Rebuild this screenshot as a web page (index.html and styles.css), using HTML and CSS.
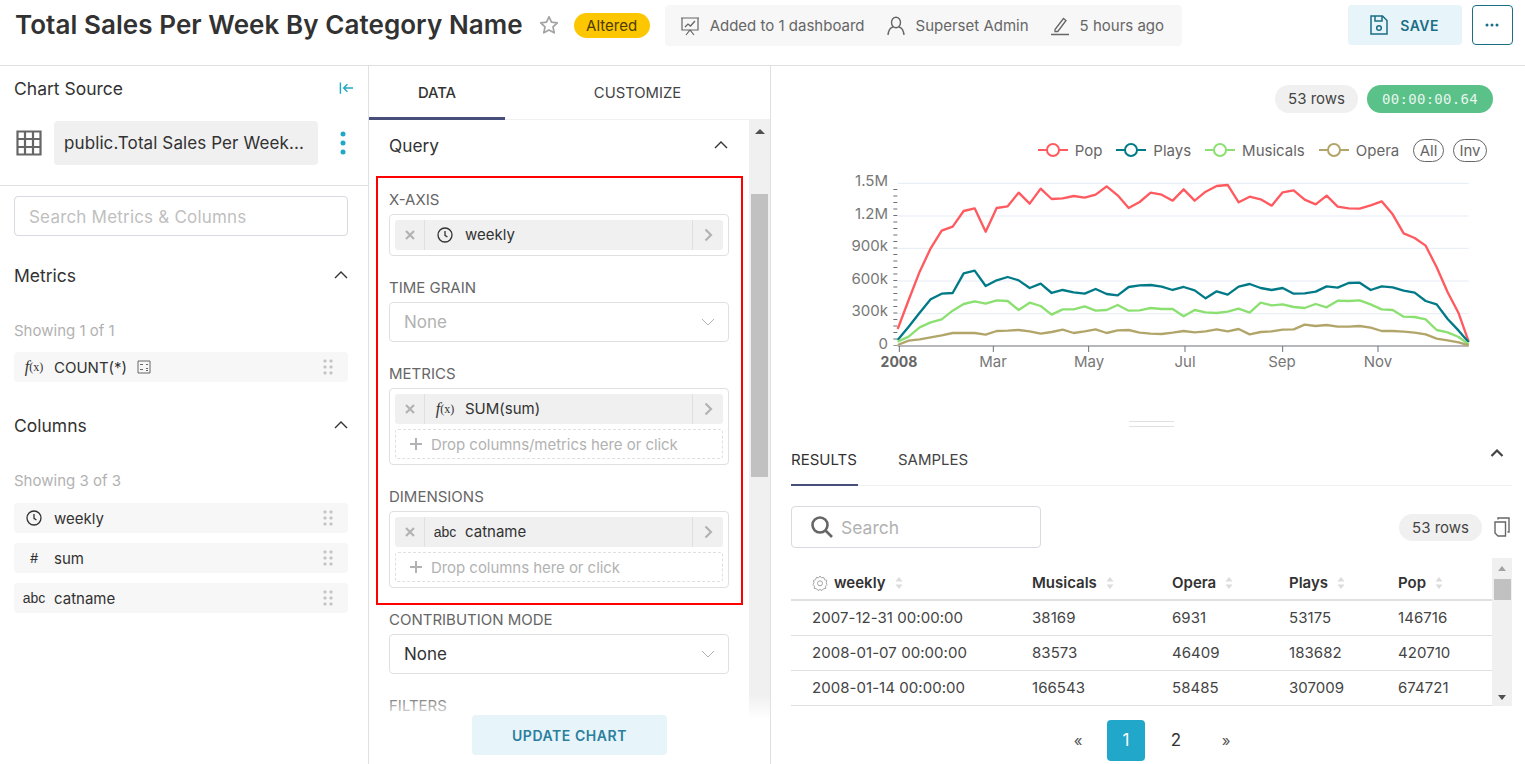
FILE: index.html
```html
<!DOCTYPE html>
<html lang="en">
<head>
<meta charset="utf-8">
<title>Total Sales Per Week By Category Name</title>
<link rel="stylesheet" href="styles.css">
</head>
<body>
<svg class="sprite" xmlns="http://www.w3.org/2000/svg">
  <symbol id="clock" viewBox="0 0 16 16"><circle cx="8" cy="8" r="7" fill="none" stroke="currentColor" stroke-width="1.3"/><path d="M8 4v4.4l2.4 1.6" fill="none" stroke="currentColor" stroke-width="1.3"/></symbol>
  <symbol id="drag" viewBox="0 0 10 16"><g fill="#c4c4c4"><rect x="0.5" y="0.5" width="3" height="3" rx="1"/><rect x="6.5" y="0.5" width="3" height="3" rx="1"/><rect x="0.5" y="6.5" width="3" height="3" rx="1"/><rect x="6.5" y="6.5" width="3" height="3" rx="1"/><rect x="0.5" y="12.5" width="3" height="3" rx="1"/><rect x="6.5" y="12.5" width="3" height="3" rx="1"/></g></symbol>
  <symbol id="up" viewBox="0 0 14 8"><path d="M1 7l6-6 6 6" fill="none" stroke="currentColor" stroke-width="1.4"/></symbol>
  <symbol id="up-bold" viewBox="0 0 14 8"><path d="M1.500 7l5.500-5.500L12.500 7" fill="none" stroke="currentColor" stroke-width="2.200"/></symbol>
  <symbol id="down" viewBox="0 0 14 8"><path d="M1 1l6 6 6-6" fill="none" stroke="currentColor" stroke-width="1"/></symbol>
  <symbol id="x" viewBox="0 0 10 10"><path d="M1 1l8 8M9 1l-8 8" fill="none" stroke="currentColor" stroke-width="2.2"/></symbol>
  <symbol id="next" viewBox="0 0 9 14"><path d="M1.5 1.5L7 7l-5.5 5.5" fill="none" stroke="currentColor" stroke-width="2.2"/></symbol>
  <symbol id="plus" viewBox="0 0 12 12"><path d="M6 0v12M0 6h12" fill="none" stroke="currentColor" stroke-width="2"/></symbol>
  <symbol id="sort" viewBox="0 0 8 12"><path d="M4 0l3.5 4.5h-7zM4 12L.5 7.5h7z" fill="#dcdcdc"/></symbol>
  <symbol id="legend" viewBox="0 0 30 16"><path d="M0 8h9M21 8h9" stroke="currentColor" stroke-width="2"/><circle cx="15" cy="8" r="6" fill="#fff" stroke="currentColor" stroke-width="2"/></symbol>
</svg>

<div class="app">
  <header class="topbar">
    <h1 class="title">Total Sales Per Week By Category Name</h1>
    <svg class="star" viewBox="0 0 20 20"><path d="M10 1.8l2.5 5.4 5.8.7-4.3 4 1.2 5.9L10 14.9 4.800 17.800 6 11.900l-4.300-4 5.800-.7z" fill="none" stroke="#a3a3a3" stroke-width="1.7" stroke-linejoin="round"/></svg>
    <span class="altered">Altered</span>
    <div class="meta">
      <svg class="meta-icon" viewBox="0 0 20 20" fill="none" stroke="#666" stroke-width="1.2"><path d="M1 2h18M2 2v12h16V2M6 19l4-5 4 5"/><path d="M5 11l3-3 2.500 2L15 5" stroke-width="1.300"/></svg>
      <span class="meta-text">Added to 1 dashboard</span>
      <svg class="meta-icon meta-gap" viewBox="0 0 20 20" fill="none" stroke="#666" stroke-width="1.400"><ellipse cx="10" cy="6.500" rx="4.500" ry="5.300"/><path d="M2 19c.5-5 3-7.500 5-8M18 19c-.5-5-3-7.500-5-8"/></svg>
      <span class="meta-text">Superset Admin</span>
      <svg class="meta-icon meta-gap" viewBox="0 0 20 20" fill="none" stroke="#666" stroke-width="1.300"><path d="M5 13.500L13.500 2.500l2.500 2L7.800 15.500H5zM1 18.500h18"/></svg>
      <span class="meta-text">5 hours ago</span>
    </div>
    <button class="save" type="button">
      <svg class="save-icon" viewBox="0 0 18 20" fill="none" stroke="currentColor" stroke-width="1.500"><path d="M1 1h11.500L17 5.500V19H1z"/><path d="M5 1v5h7V1"/><circle cx="9" cy="13" r="2.300"/></svg>
      SAVE
    </button>
    <button class="more" type="button" aria-label="More"><svg class="more-icon" viewBox="0 0 14 4"><circle cx="2" cy="2" r="1.500"/><circle cx="7" cy="2" r="1.500"/><circle cx="12" cy="2" r="1.500"/></svg></button>
  </header>

  <main class="workspace">
    <aside class="source">
      <div class="source-head">
        <span>Chart Source</span>
        <svg class="collapse" viewBox="0 0 16 14" fill="none" stroke="#20a7c9" stroke-width="1.500"><path d="M1.500 1v12M15 7H5M9 3L5 7l4 4"/></svg>
      </div>
      <div class="dataset">
        <svg class="grid-icon" viewBox="0 0 26 26"><path d="M1.500 1.500h23v23h-23zM1.500 9h23M1.500 17h23M9 1.500v23M17 1.500v23" fill="none" stroke="#666" stroke-width="2.200"/></svg>
        <div class="dataset-name">public.Total Sales Per Week...</div>
        <svg class="kebab" viewBox="0 0 6 24"><circle cx="3" cy="3" r="2.500" fill="#20a7c9"/><circle cx="3" cy="12" r="2.500" fill="#20a7c9"/><circle cx="3" cy="21" r="2.500" fill="#20a7c9"/></svg>
      </div>
      <div class="search-wrap"><div class="source-search">Search Metrics &amp; Columns</div></div>
      <div class="section-head metrics-head"><span>Metrics</span><svg class="chev"><use href="#up"/></svg></div>
      <div class="showing">Showing 1 of 1</div>
      <div class="item-list">
        <div class="item"><span class="type fx">f<small>(x)</small></span><span>COUNT(*)</span><svg class="calc" viewBox="0 0 14 14" fill="none" stroke="#666"><path d="M1 1h12v12H1zM3 4.500h3M9 4.500h2M3 9.500h3M9 8.500h2M9 10.500h2"/></svg><svg class="drag"><use href="#drag"/></svg></div>
      </div>
      <div class="section-head columns-head"><span>Columns</span><svg class="chev"><use href="#up"/></svg></div>
      <div class="showing">Showing 3 of 3</div>
      <div class="item-list columns-list">
        <div class="item"><span class="type"><svg class="clock"><use href="#clock"/></svg></span><span>weekly</span><svg class="drag"><use href="#drag"/></svg></div>
        <div class="item"><span class="type hash">#</span><span>sum</span><svg class="drag"><use href="#drag"/></svg></div>
        <div class="item"><span class="type abc">abc</span><span>catname</span><svg class="drag"><use href="#drag"/></svg></div>
      </div>
    </aside>

    <section class="controls">
      <nav class="tabs">
        <div class="tab tab-data">DATA</div>
        <div class="tab tab-custom">CUSTOMIZE</div>
      </nav>
      <div class="control-body">
        <div class="control-scroll">
          <div class="query-head"><span>Query</span><svg class="chev"><use href="#up"/></svg></div>
          <div class="highlight">
            <label class="field-label">X-AXIS</label>
            <div class="dnd">
              <div class="pill"><span class="pill-x"><svg class="x-icon"><use href="#x"/></svg></span><span class="pill-body"><span class="pill-type"><svg class="clock"><use href="#clock"/></svg></span>weekly</span><span class="pill-next"><svg class="next-icon"><use href="#next"/></svg></span></div>
            </div>
            <label class="field-label field-gap">TIME GRAIN</label>
            <div class="select muted"><span>None</span><svg class="select-chev"><use href="#down"/></svg></div>
            <label class="field-label field-gap">METRICS</label>
            <div class="dnd">
              <div class="pill"><span class="pill-x"><svg class="x-icon"><use href="#x"/></svg></span><span class="pill-body"><span class="pill-type fx">f<small>(x)</small></span>SUM(sum)</span><span class="pill-next"><svg class="next-icon"><use href="#next"/></svg></span></div>
              <div class="drop"><svg class="plus"><use href="#plus"/></svg>Drop columns/metrics here or click</div>
            </div>
            <label class="field-label field-gap">DIMENSIONS</label>
            <div class="dnd">
              <div class="pill"><span class="pill-x"><svg class="x-icon"><use href="#x"/></svg></span><span class="pill-body"><span class="pill-type abc">abc</span>catname</span><span class="pill-next"><svg class="next-icon"><use href="#next"/></svg></span></div>
              <div class="drop"><svg class="plus"><use href="#plus"/></svg>Drop columns here or click</div>
            </div>
          </div>
          <div class="below">
            <label class="field-label">CONTRIBUTION MODE</label>
            <div class="select"><span>None</span><svg class="select-chev"><use href="#down"/></svg></div>
            <label class="field-label field-gap">FILTERS</label>
            <div class="select"></div>
          </div>
        </div>
        <div class="scrollbar">
          <span class="arrow-up"></span>
          <div class="thumb"></div>
        </div>
      </div>
      <div class="update-bar"><button class="update" type="button">UPDATE CHART</button></div>
    </section>

    <section class="output">
      <div class="chart-pane">
        <div class="chips">
          <span class="chip">53 rows</span>
          <span class="timer">00:00:00.64</span>
        </div>
        <div class="legend">
          <span class="legend-item"><svg class="legend-icon pop"><use href="#legend"/></svg>Pop</span>
          <span class="legend-item"><svg class="legend-icon plays"><use href="#legend"/></svg>Plays</span>
          <span class="legend-item"><svg class="legend-icon musicals"><use href="#legend"/></svg>Musicals</span>
          <span class="legend-item"><svg class="legend-icon opera"><use href="#legend"/></svg>Opera</span>
          <span class="legend-btn legend-all">All</span>
          <span class="legend-btn">Inv</span>
        </div>
        <svg class="chart" viewBox="840 160 660 220" xmlns="http://www.w3.org/2000/svg">
          <g transform="translate(860 160) scale(.33333)">
            <path d="M113 70H1826M113 168H1826M113 265H1826M113 363H1826M113 461H1826" stroke="#e6ebf5" stroke-width="3" fill="none"/>
            <path d="M106 87V557" stroke="#6e7079" stroke-width="12" stroke-dasharray="3 16.500" fill="none"/>
            <path d="M113 558H1826M118 558v18M400 558v18M686 558v18M975 558v18M1268 558v18M1554 558v18" stroke="#6e7079" stroke-width="3" fill="none"/>
            <polyline class="line" stroke="#ff5a5f" points="113,507 146,420 179,335 212,265 245,212 278,200 311,153 344,145 377,215 410,144 443,139 476,98 509,131 542,86 575,117 608,115 641,108 674,113 707,104 740,79 773,106 806,144 839,126 872,98 905,104 938,122 971,88 1004,122 1037,95 1070,78 1103,75 1136,127 1169,110 1202,118 1235,137 1268,97 1301,91 1334,119 1367,133 1400,107 1433,140 1466,145 1499,146 1532,136 1565,124 1598,163 1631,220 1664,234 1697,257 1730,322 1763,397 1796,460 1826,545"/>
            <polyline class="line" stroke="#007a87" points="113,540 146,500 179,458 212,418 245,401 278,399 311,340 344,332 377,378 410,361 443,351 476,361 509,384 542,371 575,399 608,390 641,397 674,401 707,387 740,402 773,406 806,381 839,376 872,375 905,380 938,390 971,381 1004,391 1037,415 1070,394 1103,404 1136,380 1169,372 1202,384 1235,390 1268,384 1301,401 1334,400 1367,395 1400,379 1433,383 1466,369 1499,368 1532,390 1565,379 1598,382 1631,392 1664,398 1697,423 1730,433 1763,477 1796,512 1826,547"/>
            <polyline class="line" stroke="#8ce071" points="113,545 146,530 179,502 212,487 245,478 278,452 311,432 344,424 377,431 410,421 443,423 476,450 509,428 542,438 575,464 608,448 641,448 674,439 707,452 740,450 773,435 806,452 839,451 872,444 905,447 938,447 971,469 1004,450 1037,457 1070,459 1103,455 1136,446 1169,458 1202,428 1235,436 1268,433 1301,441 1334,444 1367,432 1400,442 1433,422 1466,423 1499,421 1532,433 1565,448 1598,450 1631,470 1664,471 1697,478 1730,510 1763,517 1796,531 1826,553"/>
            <polyline class="line" stroke="#b2a56a" points="113,555 146,542 179,538 212,532 245,526 278,519 311,519 344,519 377,524 410,513 443,512 476,510 509,514 542,521 575,516 608,509 641,519 674,514 707,508 740,519 773,511 806,510 839,518 872,521 905,522 938,518 971,513 1004,517 1037,514 1070,508 1103,514 1136,507 1169,523 1202,516 1235,514 1268,509 1301,508 1334,494 1367,498 1400,495 1433,500 1466,500 1499,498 1532,503 1565,513 1598,513 1631,515 1664,518 1697,523 1730,536 1763,541 1796,547 1826,556"/>
          </g>
          <g class="axis-y">
            <text x="888" y="186">1.5M</text>
            <text x="888" y="219">1.2M</text>
            <text x="888" y="251">900k</text>
            <text x="888" y="284">600k</text>
            <text x="888" y="316">300k</text>
            <text x="888" y="349">0</text>
          </g>
          <g class="axis-x">
            <text class="axis-year" x="899" y="367">2008</text>
            <text x="993" y="367">Mar</text>
            <text x="1089" y="367">May</text>
            <text x="1185" y="367">Jul</text>
            <text x="1282" y="367">Sep</text>
            <text x="1378" y="367">Nov</text>
          </g>
        </svg>
      </div>
      <div class="handle"></div>
      <div class="results">
        <div class="result-tabs">
          <div class="rtab rtab-active">RESULTS</div>
          <div class="rtab">SAMPLES</div>
          <svg class="results-chev"><use href="#up-bold"/></svg>
        </div>
        <div class="result-tools">
          <div class="table-search">
            <svg class="search-icon" viewBox="0 0 22 22" fill="none" stroke="#666" stroke-width="2.600"><circle cx="9" cy="9" r="7.500"/><path d="M14.500 14.500L21 21"/></svg>
            <span>Search</span>
          </div>
          <span class="chip chip-tools">53 rows</span>
          <svg class="copy" viewBox="0 0 16 20" fill="none" stroke="#666" stroke-width="1.400"><path d="M1 5h10.500v14H4l-3-3zM4 2.500V1h11v14h-1.500"/></svg>
        </div>
        <div class="table-wrap">
          <table class="data-table">
            <colgroup><col class="c1"><col class="c2"><col class="c3"><col class="c4"><col class="c5"></colgroup>
            <thead>
              <tr>
                <th><svg class="gear" viewBox="0 0 16 16" fill="none" stroke="#a3a3a3"><path d="M8 1l1.500 1.800 2.300-.4.700 2.200 2.200.8-.5 2.300L15 9.500l-1.500 1.700.2 2.300-2.300.3L10 15.500l-2-1-2 1-1.400-1.700-2.300-.3.200-2.300L1 9.500l1-1.800-.5-2.300 2.200-.8.700-2.200 2.300.4z"/><circle cx="8" cy="8.300" r="2.500"/></svg>weekly<svg class="sort"><use href="#sort"/></svg></th>
                <th>Musicals<svg class="sort"><use href="#sort"/></svg></th>
                <th>Opera<svg class="sort"><use href="#sort"/></svg></th>
                <th>Plays<svg class="sort"><use href="#sort"/></svg></th>
                <th>Pop<svg class="sort"><use href="#sort"/></svg></th>
              </tr>
            </thead>
            <tbody>
              <tr><td>2007-12-31 00:00:00</td><td>38169</td><td>6931</td><td>53175</td><td>146716</td></tr>
              <tr><td>2008-01-07 00:00:00</td><td>83573</td><td>46409</td><td>183682</td><td>420710</td></tr>
              <tr><td>2008-01-14 00:00:00</td><td>166543</td><td>58485</td><td>307009</td><td>674721</td></tr>
            </tbody>
          </table>
          <div class="table-scroll">
            <span class="mini-up"></span>
            <div class="mini-thumb"></div>
            <span class="mini-down"></span>
          </div>
        </div>
        <div class="pager">
          <span class="page-arrow">&laquo;</span>
          <span class="page page-on">1</span>
          <span class="page">2</span>
          <span class="page-arrow">&raquo;</span>
        </div>
      </div>
    </section>
  </main>
</div>
</body>
</html>
```
FILE: styles.css
```css
* { box-sizing: border-box; }
html, body { margin: 0; padding: 0; background: #fff; }
body { font-family: Inter, "Noto Sans", "Liberation Sans", sans-serif; color: #323232; font-size: 15px; }
.sprite { display: none; }
.app { width: 1525px; height: 764px; overflow: hidden; display: flex; flex-direction: column; }

/* Top bar */
.topbar { height: 66px; flex: none; display: flex; align-items: flex-start; border-bottom: 1px solid #e0e0e0; padding-left: 15px; }
.title { margin: 8px 0 0; font-size: 26px; line-height: 34px; font-weight: 600; letter-spacing: .07px; color: #323232; white-space: nowrap; }
.star { width: 20px; height: 20px; margin: 15px 0 0 16px; flex: none; }
.altered { margin: 13px 0 0 15px; width: 76px; height: 25px; border-radius: 13px; background: #fcc700; font-size: 15px; line-height: 25px; text-align: center; color: #4d3c00; }
.meta { margin: 5px 0 0 15px; height: 41px; width: 517px; background: #f7f7f7; border-radius: 4px; display: flex; align-items: center; padding-left: 15px; }
.meta-icon { width: 20px; height: 20px; flex: none; margin-right: 10px; }
.meta-gap { margin-left: 21px; }
.meta-text { color: #666; font-size: 15px; white-space: nowrap; }
.save { margin: 5px 0 0 166px; width: 114px; height: 40px; border: 0; border-radius: 4px; background: #e7f4f9; color: #1a6e86; font: 600 14px Inter, sans-serif; letter-spacing: .5px; display: flex; align-items: center; justify-content: center; gap: 12px; padding: 0; }
.save-icon { width: 18px; height: 20px; }
.more { margin: 5px 0 0 10px; width: 41px; height: 40px; border: 1px solid #1a6e86; border-radius: 4px; background: #fff; padding: 0; display: flex; align-items: center; justify-content: center; }
.more-icon { width: 14px; height: 4px; fill: #1a6e86; }

.workspace { flex: 1; min-height: 0; display: flex; }

/* Left: chart source */
.source { width: 369px; flex: none; border-right: 1px solid #e0e0e0; }
.source-head { height: 44px; display: flex; align-items: center; justify-content: space-between; padding: 0 14px; font-size: 17.5px; }
.collapse { width: 15px; height: 14px; }
.dataset { margin-top: 11px; height: 64px; padding-bottom: 20px; display: flex; align-items: center; padding-left: 16px; }
.grid-icon { width: 26px; height: 26px; flex: none; }
.dataset-name { margin-left: 12px; width: 264px; height: 44px; background: #f0f0f0; border-radius: 4px; font-size: 17px; letter-spacing: .1px; line-height: 44px; padding-left: 10px; white-space: nowrap; }
.kebab { width: 6px; height: 24px; margin-left: 22px; flex: none; }
.search-wrap { border-top: 1px solid #e0e0e0; padding: 10px 20px 0 14px; }
.source-search { height: 40px; border: 1px solid #d9d9e0; border-radius: 4px; color: #bfbfbf; font-size: 17px; letter-spacing: .2px; line-height: 40px; padding-left: 14px; }
.section-head { height: 30px; display: flex; align-items: center; justify-content: space-between; padding: 0 20px 0 14px; font-size: 17.5px; }
.metrics-head { margin-top: 24px; }
.columns-head { margin-top: 28px; }
.chev { width: 14px; height: 8px; color: #323232; }
.showing { margin-top: 31px; height: 20px; line-height: 20px; padding-left: 14px; color: #b2b2b2; font-size: 15px; }
.item-list { margin: 11px 20px 0 14px; display: flex; flex-direction: column; gap: 10px; }
.columns-list { margin-top: 12px; }
.item { height: 30px; background: #f7f7f7; border-radius: 4px; display: flex; align-items: center; font-size: 15px; }
.type { width: 40px; flex: none; display: flex; justify-content: center; align-items: center; color: #323232; }
.fx { font-family: "Liberation Serif", serif; font-style: italic; font-size: 16px; }
.fx small { font-size: 12px; font-style: normal; }
.hash { font-size: 13px; font-weight: 400; }
.abc { font-size: 14px; font-family: "Liberation Sans", sans-serif; }
.clock { width: 16px; height: 16px; color: #323232; }
.calc { width: 14px; height: 14px; margin-left: 10px; }
.drag { width: 10px; height: 16px; margin-left: auto; margin-right: 15px; }

/* Middle: controls */
.controls { width: 402px; flex: none; border-right: 1px solid #e0e0e0; position: relative; display: flex; flex-direction: column; min-height: 0; overflow: hidden; }
.tabs { height: 54px; flex: none; display: flex; border-bottom: 1px solid #f0f0f0; }
.tab { font-size: 14.8px; line-height: 54px; text-align: center; }
.tab-data { width: 136px; font-weight: 500; height: 54px; border-bottom: 3px solid #484e7a; }
.tab-custom { flex: 1; color: #444; }
.control-body { flex: 1; min-height: 0; display: flex; }
.control-scroll { width: 380px; flex: none; }
.query-head { height: 30px; margin-top: 10px; display: flex; align-items: center; justify-content: space-between; padding: 0 21px 0 20px; font-size: 17.3px; }
.highlight { margin: 16px 0 0 7px; width: 367px; height: 429px; border: 2px solid #f00; padding: 12px 12px 0 11px; }
.field-label { display: block; height: 18px; line-height: 20px; margin-bottom: 6px; color: #666; font-size: 15px; white-space: nowrap; }
.field-gap { margin-top: 22px; }
.dnd { border: 1px solid #e0e0e0; border-radius: 4px; padding: 5px; display: flex; flex-direction: column; gap: 5px; }
.pill { height: 30px; background: #f0f0f0; border-radius: 3px; display: flex; align-items: center; }
.pill-x { width: 30px; height: 30px; flex: none; border-right: 1px solid #e0e0e0; display: flex; align-items: center; justify-content: center; color: #b2b2b2; }
.x-icon { width: 10px; height: 10px; }
.pill-body { flex: 1; display: flex; align-items: center; font-size: 15px; line-height: 28px; height: 30px; }
.pill-type { width: 40px; display: flex; justify-content: center; align-items: center; color: #323232; }
.pill-next { width: 31px; height: 30px; flex: none; border-left: 1px solid #e0e0e0; display: flex; align-items: center; justify-content: center; color: #b2b2b2; }
.next-icon { width: 9px; height: 14px; }
.drop { height: 30px; border: 1px dashed #e0e0e0; border-radius: 3px; display: flex; align-items: center; padding-left: 14px; color: #b2b2b2; font-size: 15px; letter-spacing: -.05px; white-space: nowrap; }
.plus { width: 12px; height: 12px; margin-right: 9px; color: #b2b2b2; }
.select { height: 40px; border: 1px solid #e0e0e0; border-radius: 4px; display: flex; align-items: center; justify-content: space-between; padding: 0 13px 0 14px; font-size: 17px; color: #323232; }
.muted { color: #b2b2b2; }
.select-chev { width: 14px; height: 8px; color: #b2b2b2; }
.below { margin: 5px 0 0 20px; width: 340px; }
.scrollbar { width: 21px; flex: none; background: #f0f0f0; position: relative; display: flex; flex-direction: column; align-items: center; }
.arrow-up { margin-top: 9px; width: 0; height: 0; border-left: 5px solid transparent; border-right: 5px solid transparent; border-bottom: 5px solid #505050; }
.thumb { margin-top: 60px; width: 17px; height: 283px; background: #c1c1c1; }
.update-bar { position: absolute; left: 0; right: 0; bottom: 0; height: 69px; background: linear-gradient(to bottom, rgba(255,255,255,0), #fff 35%); display: flex; justify-content: center; align-items: flex-end; padding-bottom: 9px; }
.update { width: 195px; height: 40px; border: 0; border-radius: 4px; background: #e7f4f9; color: #2b7f9e; font: 600 14px Inter, sans-serif; letter-spacing: .55px; }

/* Right: chart + results */
.output { flex: 1; min-width: 0; }
.chart-pane { height: 354px; }
.chips { padding: 19px 32px 0 0; display: flex; justify-content: flex-end; gap: 9px; }
.chip { display: inline-block; width: 83px; height: 28px; border-radius: 14px; background: #f0f0f0; text-align: center; line-height: 28px; font-size: 15px; color: #444; }
.timer { width: 126px; height: 28px; border-radius: 14px; background: #5ac189; color: #e6f5ed; font: 14px/28px "DejaVu Sans Mono", "Liberation Mono", monospace; letter-spacing: .3px; text-align: center; }
.legend { margin-top: 25px; height: 24px; display: flex; justify-content: flex-end; align-items: center; padding-right: 38px; color: #666; font-size: 15px; }
.legend-item { display: flex; align-items: center; margin-right: 14px; }
.legend-icon { width: 30px; height: 16px; margin-right: 7px; }
.pop { color: #ff5a5f; }
.plays { color: #007a87; }
.musicals { color: #8ce071; }
.opera { color: #b2a56a; }
.legend-btn { height: 23px; padding: 0 5.5px; border: 1px solid #666; border-radius: 12px; line-height: 21px; margin-right: 9px; font-size: 15px; }
.legend-btn:last-child { margin-right: 0; }
.chart { display: block; width: 660px; height: 220px; margin: -2px 0 0 69px; }
.line { fill: none; stroke-width: 7; stroke-linejoin: round; }
.axis-y text { text-anchor: end; fill: #777; font-size: 15px; }
.axis-x text { text-anchor: middle; fill: #777; font-size: 15px; }
.axis-x .axis-year { font-size: 14px; font-weight: 700; fill: #666; }
.handle { width: 45px; height: 6px; margin: 1px 0 0 358px; border-top: 1px solid #e0e0e0; border-bottom: 1px solid #e0e0e0; }
.results { padding: 0 13px 0 20px; }
.result-tabs { height: 59px; border-bottom: 1px solid #f0f0f0; display: flex; position: relative; }
.rtab { height: 59px; padding-top: 23px; line-height: 20px; font-size: 15px; color: #444; margin-right: 40px; white-space: nowrap; }
.rtab-active { width: 67px; border-bottom: 2px solid #484e7a; color: #323232; }
.results-chev { position: absolute; right: 8px; top: 22px; width: 14px; height: 8px; color: #444; }
.result-tools { margin-top: 20px; height: 42px; display: flex; align-items: center; }
.table-search { width: 250px; height: 42px; border: 1px solid #d9d9e0; border-radius: 4px; display: flex; align-items: center; padding-left: 19px; color: #b2b2b2; font-size: 17.5px; }
.search-icon { width: 22px; height: 22px; margin-right: 8px; }
.chip-tools { margin-left: auto; height: 27px; line-height: 27px; }
.copy { width: 16px; height: 20px; margin-left: 12px; margin-right: 2px; }
.table-wrap { margin-top: 10px; height: 148px; display: flex; }
.data-table { width: 701px; flex: none; table-layout: fixed; border-collapse: collapse; height: 148px; }
.c1 { width: 220px; } .c2 { width: 140px; } .c3 { width: 117px; } .c4 { width: 109px; } .c5 { width: 115px; }
.data-table th { height: 42px; padding: 8px 0 0 21px; text-align: left; font-size: 15px; font-weight: 600; border-bottom: 2px solid #e0e0e0; white-space: nowrap; }
.data-table td { height: 35px; padding: 0 0 0 21px; font-size: 15px; letter-spacing: .05px; border-bottom: 1px solid #e0e0e0; color: #444; white-space: nowrap; }
.gear { width: 16px; height: 16px; margin-right: 6px; vertical-align: -3px; }
.sort { width: 8px; height: 12px; margin-left: 9px; vertical-align: -1px; }
.table-scroll { width: 20px; flex: none; background: #f0f0f0; display: flex; flex-direction: column; align-items: center; }
.mini-up { margin-top: 8px; width: 0; height: 0; border-left: 4px solid transparent; border-right: 4px solid transparent; border-bottom: 5px solid #a3a3a3; }
.mini-thumb { margin-top: 8px; width: 17px; height: 21px; background: #c1c1c1; }
.mini-down { margin-top: auto; margin-bottom: 6px; width: 0; height: 0; border-left: 4px solid transparent; border-right: 4px solid transparent; border-top: 5px solid #505050; }
.pager { margin-top: 14px; display: flex; align-items: center; padding-left: 281px; }
.page { width: 38px; height: 41px; line-height: 41px; text-align: center; font-size: 17px; border-radius: 4px; color: #323232; }
.page + .page { margin-left: 12px; }
.page-on { background: #20a7c9; color: #fff; }
.page-arrow { width: 12px; text-align: center; color: #555; font-size: 15px; }
.page-arrow:first-child { margin-right: 23px; }
.page-arrow:last-child { margin-left: 25px; }
```
